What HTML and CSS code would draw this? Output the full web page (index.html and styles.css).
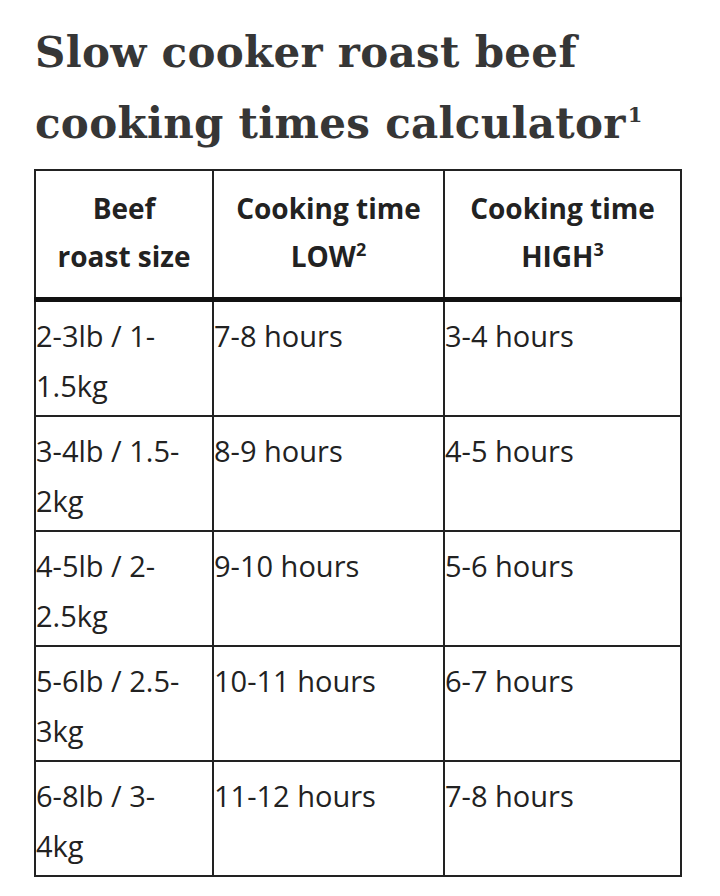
FILE: index.html
```html
<!DOCTYPE html>
<html lang="en">
<head>
<meta charset="utf-8">
<title>Slow cooker roast beef cooking times calculator</title>
<link rel="stylesheet" href="styles.css">
</head>
<body>
<main class="page">
  <h1 class="title">Slow cooker roast beef cooking times calculator<sup class="title-sup">1</sup></h1>
  <table class="times">
    <colgroup>
      <col class="c1"><col class="c2"><col class="c3">
    </colgroup>
    <thead>
      <tr>
        <th>Beef<br>roast size</th>
        <th>Cooking time<br>LOW<sup>2</sup></th>
        <th>Cooking time<br>HIGH<sup>3</sup></th>
      </tr>
    </thead>
    <tbody>
      <tr><td>2-3lb / 1-1.5kg</td><td>7-8 hours</td><td>3-4 hours</td></tr>
      <tr><td>3-4lb / 1.5-2kg</td><td>8-9 hours</td><td>4-5 hours</td></tr>
      <tr><td>4-5lb / 2-2.5kg</td><td>9-10 hours</td><td>5-6 hours</td></tr>
      <tr><td>5-6lb / 2.5-3kg</td><td>10-11 hours</td><td>6-7 hours</td></tr>
      <tr><td>6-8lb / 3-4kg</td><td>11-12 hours</td><td>7-8 hours</td></tr>
    </tbody>
  </table>
</main>
</body>
</html>
```

FILE: styles.css
```css
html, body {
  margin: 0;
  padding: 0;
  background: #ffffff;
}

.page {
  padding: 0 0 0 34px;
}

.title {
  margin: 17px 0 10px 1px;
  font-family: "DejaVu Serif", "Liberation Serif", serif;
  font-weight: bold;
  font-size: 42px;
  letter-spacing: 0.3px;
  line-height: 71px;
  color: #363636;
  width: 650px;
}

.title-sup {
  font-size: 21px;
  line-height: 0;
  vertical-align: 16px;
  letter-spacing: 0;
  margin-left: 2px;
}

.times {
  border-collapse: collapse;
  width: 646px;
  table-layout: fixed;
  font-family: "Open Sans", "Liberation Sans", sans-serif;
  color: #222222;
}

.c1 { width: 178px; }
.c2 { width: 231px; }
.c3 { width: 237px; }

.times th,
.times td {
  border: 2px solid #222222;
  vertical-align: top;
}

.times th {
  font-weight: bold;
  font-size: 28px;
  line-height: 48px;
  text-align: center;
  padding: 13px 4px 17px;
  border-bottom: 5px solid #111111;
}

.times th sup {
  font-size: 18px;
  line-height: 0;
  vertical-align: 11px;
}

.times td {
  font-size: 29px;
  line-height: 50px;
  text-align: left;
  padding: 9px 14px 4px 0;
}
```
